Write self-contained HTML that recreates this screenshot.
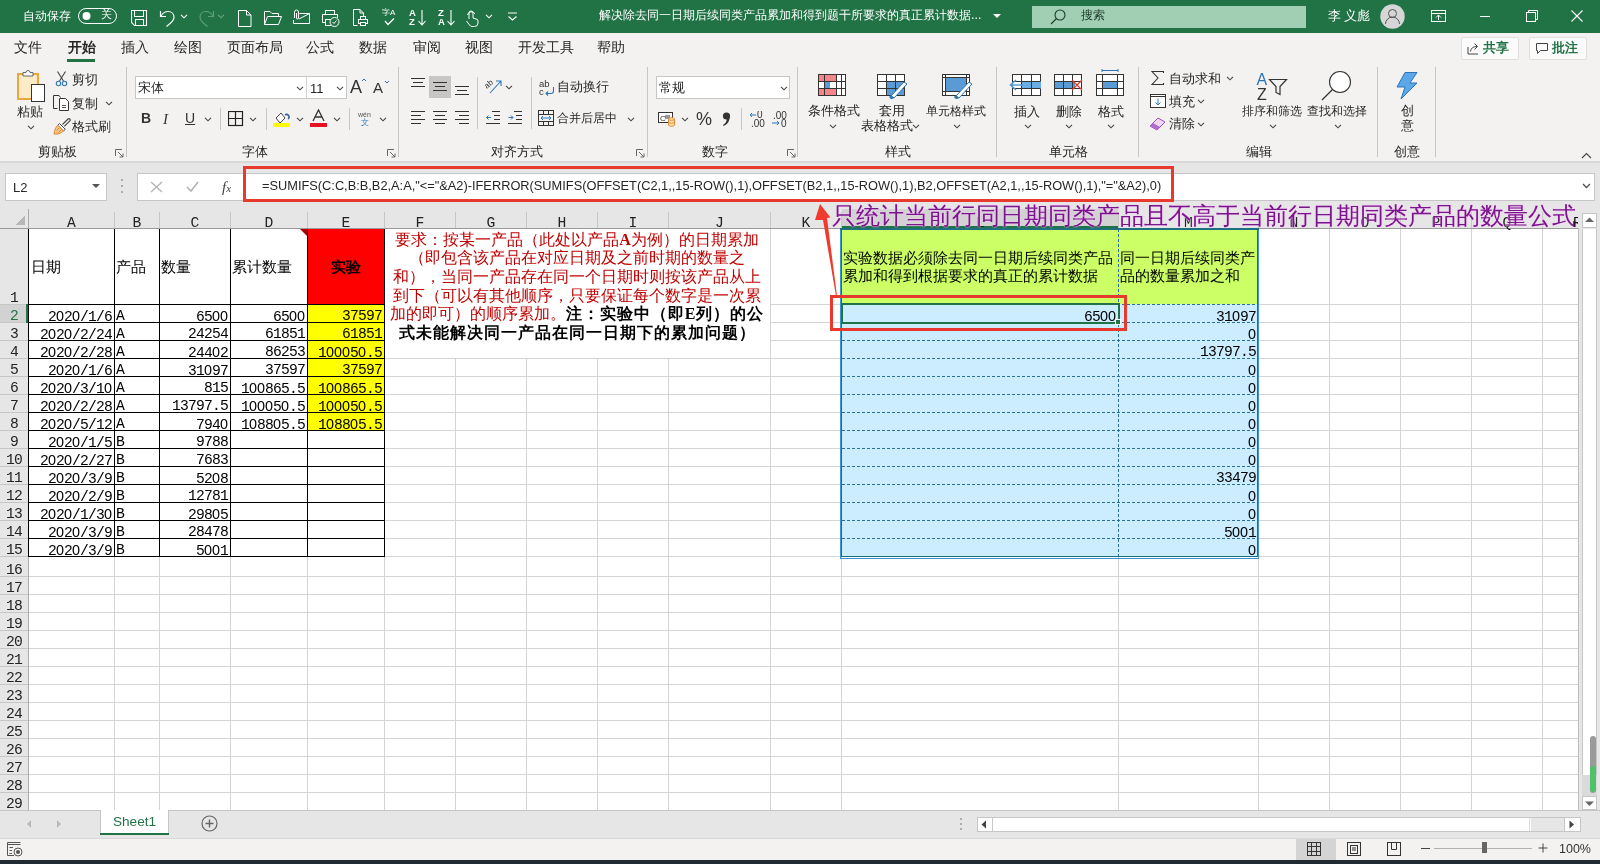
<!DOCTYPE html><html><head><meta charset="utf-8"><style>
*{box-sizing:border-box;margin:0;padding:0}
html,body{width:1600px;height:864px;overflow:hidden;background:#f3f2f1;font-family:"Liberation Sans",sans-serif;color:#262626}
.a{position:absolute;white-space:nowrap;will-change:transform}
.m{font-family:"Liberation Mono",monospace;font-size:14.67px;letter-spacing:-0.8px;color:#000;line-height:18px}
.z{font-family:'Liberation Sans',sans-serif;font-size:14.4px;letter-spacing:-0.01px}
.cj{font-size:15px;color:#000;line-height:18px}
</style></head><body>
<div class="a" style="left:0;top:0;width:1600px;height:33px;background:#217346"></div>
<div class="a" style="left:0;top:33px;width:1600px;height:130px;background:#f3f2f1"></div>
<div class="a" style="left:0;top:163px;width:1600px;height:46px;background:#e6e6e6"></div>
<div class="a" style="left:23px;top:10px;font-size:12.3px;line-height:12.3px;color:#ffffff;font-weight:normal;">自动保存</div>
<svg class="a" style="left:78px;top:8px;" width="39" height="16" viewBox="0 0 39 16"><rect x="0.5" y="0.5" width="38" height="15" rx="7.5" fill="none" stroke="#fff" stroke-width="1"/><circle cx="8.5" cy="8" r="4" fill="#fff"/></svg>
<div class="a" style="left:101px;top:9px;font-size:11px;line-height:11px;color:#ffffff;font-weight:normal;">关</div>
<svg class="a" style="left:131px;top:10px;" width="17" height="16" viewBox="0 0 17 16"><path d="M0.5 0.5 H15.5 V15.5 H3.5 L0.5 12.5 Z" fill="none" stroke="#fff" stroke-width="1.1"/><rect x="3.5" y="0.5" width="9" height="6" fill="none" stroke="#fff"/><rect x="4.5" y="9.5" width="8" height="6" fill="none" stroke="#fff"/></svg>
<svg class="a" style="left:159px;top:9px;" width="18" height="18" viewBox="0 0 18 18"><path d="M1.5 2 V7.5 H7" fill="none" stroke="#fff" stroke-width="1.2"/><path d="M2 7 C4 3.5 6.5 2.5 9 2.5 C12.5 2.5 15 5 15 8.5 C15 11 13.5 13 7.5 17.5" fill="none" stroke="#fff" stroke-width="1.2"/></svg>
<svg class="a" style="left:180px;top:13px;" width="8" height="6" viewBox="0 0 8 6"><path d="M1 1.7999999999999998 L4 4.800000000000001 L7 1.7999999999999998" fill="none" stroke="#fff" stroke-width="1.1"/></svg>
<svg class="a" style="left:197px;top:9px;" width="18" height="18" viewBox="0 0 18 18"><path d="M16.5 2 V7.5 H11" fill="none" stroke="#5e9e79" stroke-width="1.2"/><path d="M16 7 C14 3.5 11.5 2.5 9 2.5 C5.5 2.5 3 5 3 8.5 C3 11 4.5 13 10.5 17.5" fill="none" stroke="#5e9e79" stroke-width="1.2"/></svg>
<svg class="a" style="left:217px;top:13px;" width="8" height="6" viewBox="0 0 8 6"><path d="M1 1.7999999999999998 L4 4.800000000000001 L7 1.7999999999999998" fill="none" stroke="#6aa985" stroke-width="1.1"/></svg>
<svg class="a" style="left:238px;top:10px;" width="14" height="17" viewBox="0 0 14 17"><path d="M0.5 0.5 H8.5 L13 5 V16.5 H0.5 Z M8.5 0.5 V5 H13" fill="none" stroke="#fff"/></svg>
<svg class="a" style="left:264px;top:11px;" width="18" height="14" viewBox="0 0 18 14"><path d="M0.5 13.5 V0.5 H6 L8 2.5 H14.5 V5" fill="none" stroke="#fff"/><path d="M0.5 13.5 L3.5 5.5 H17.5 L14.5 13.5 Z" fill="none" stroke="#fff"/></svg>
<svg class="a" style="left:293px;top:9px;" width="18" height="16" viewBox="0 0 18 16"><path d="M6.5 4.5 H16.5 V14.5 H0.5 V11" fill="none" stroke="#fff"/><path d="M6 10 L16.5 4.5" stroke="#fff"/><path d="M1.5 9 V3 A2 2 0 0 1 5.5 3 V9 A1 1 0 0 1 3.5 9 V4" fill="none" stroke="#fff"/></svg>
<svg class="a" style="left:322px;top:10px;" width="18" height="17" viewBox="0 0 18 17"><rect x="3.5" y="0.5" width="9" height="4" fill="none" stroke="#fff"/><path d="M3.5 12.5 H0.5 V4.5 H15.5 V8" fill="none" stroke="#fff"/><rect x="3.5" y="9.5" width="6" height="6" fill="none" stroke="#fff"/><circle cx="12.5" cy="12" r="4.5" fill="#217346" stroke="#fff"/><path d="M10.5 12 L12 13.5 L14.5 10.5" fill="none" stroke="#fff"/></svg>
<svg class="a" style="left:353px;top:9px;" width="16" height="18" viewBox="0 0 16 18"><path d="M4.5 16.5 H0.5 V0.5 H7 L10.5 4 V7" fill="none" stroke="#fff"/><path d="M7 0.5 V4 H10.5" fill="none" stroke="#fff"/><rect x="7.5" y="7.5" width="5" height="3" fill="none" stroke="#fff"/><rect x="5.5" y="10.5" width="9" height="4" fill="none" stroke="#fff"/><rect x="7.5" y="13.5" width="5" height="3" fill="#217346" stroke="#fff"/></svg>
<div class="a" style="left:382px;top:9px;font-size:8px;line-height:8px;color:#ffffff;font-weight:normal;"><span style="font-size:8px">字A</span></div>
<svg class="a" style="left:384px;top:18px;" width="12" height="8" viewBox="0 0 12 8"><path d="M1 3 L4 6.5 L10 0.5" fill="none" stroke="#fff" stroke-width="1.2"/></svg>
<div class="a" style="left:409px;top:9px;font-size:8px;line-height:8px;color:#ffffff;font-weight:normal;"><span style="font-weight:bold;font-size:9.5px;line-height:8.5px">A<br>Z</span></div>
<svg class="a" style="left:418px;top:9px;" width="8" height="18" viewBox="0 0 8 18"><path d="M4 1 V16 M0.5 12 L4 16 L7.5 12" fill="none" stroke="#fff" stroke-width="1.1"/></svg>
<div class="a" style="left:438px;top:9px;font-size:8px;line-height:8px;color:#ffffff;font-weight:normal;"><span style="font-weight:bold;font-size:9.5px;line-height:8.5px">Z<br>A</span></div>
<svg class="a" style="left:447px;top:9px;" width="8" height="18" viewBox="0 0 8 18"><path d="M4 1 V16 M0.5 12 L4 16 L7.5 12" fill="none" stroke="#fff" stroke-width="1.1"/></svg>
<svg class="a" style="left:465px;top:9px;" width="14" height="18" viewBox="0 0 14 18"><path d="M4 10 V4 A2 2 0 0 1 8 4 V9 L11 10 A2 2 0 0 1 13 12 V14 A3.5 3.5 0 0 1 9.5 17.5 H7 A3 3 0 0 1 4.5 16 L1.5 12" fill="none" stroke="#fff"/><path d="M2.5 6 A4 4 0 0 1 10 5" fill="none" stroke="#fff"/></svg>
<svg class="a" style="left:485px;top:13px;" width="8" height="6" viewBox="0 0 8 6"><path d="M1 1.7999999999999998 L4 4.800000000000001 L7 1.7999999999999998" fill="none" stroke="#fff" stroke-width="1.1"/></svg>
<svg class="a" style="left:507px;top:12px;" width="11" height="9" viewBox="0 0 11 9"><path d="M1 1 H10" stroke="#fff"/><path d="M1.5 4.5 L5.5 8 L9.5 4.5" fill="none" stroke="#fff" stroke-width="1.1"/></svg>
<div class="a" style="left:599px;top:9px;font-size:12.4px;line-height:12.4px;color:#ffffff;font-weight:normal;">解决除去同一日期后续同类产品累加和得到题干所要求的真正累计数据...</div>
<svg class="a" style="left:993px;top:14px;" width="9" height="5" viewBox="0 0 9 5"><path d="M0 0 H8 L4 4 Z" fill="#fff"/></svg>
<div class="a" style="left:1032px;top:6px;width:274px;height:22px;background:#a0cfb3"></div>
<svg class="a" style="left:1050px;top:9px;" width="16" height="16" viewBox="0 0 16 16"><circle cx="10" cy="6" r="5" fill="none" stroke="#1d3b2b" stroke-width="1.1"/><path d="M6.5 9.5 L1 15" stroke="#1d3b2b" stroke-width="1.1"/></svg>
<div class="a" style="left:1081px;top:9px;font-size:12px;line-height:12px;color:#1d3b2b;font-weight:normal;">搜索</div>
<div class="a" style="left:1328px;top:10px;font-size:12.5px;line-height:12.5px;color:#ffffff;font-weight:normal;">李 义彪</div>
<svg class="a" style="left:1380px;top:4px;" width="25" height="25" viewBox="0 0 25 25"><circle cx="12.5" cy="12.5" r="12.2" fill="#d6d6d6"/><circle cx="12.5" cy="9.5" r="4" fill="none" stroke="#555" stroke-width="1"/><path d="M5.5 20 A7 7 0 0 1 19.5 20" fill="none" stroke="#555" stroke-width="1"/></svg>
<svg class="a" style="left:1431px;top:10px;" width="15" height="12" viewBox="0 0 15 12"><rect x="0.5" y="0.5" width="14" height="11" fill="none" stroke="#fff"/><path d="M0.5 3.5 H14.5" stroke="#fff"/><path d="M7.5 10 V5 M5 7.5 L7.5 5 L10 7.5" fill="none" stroke="#fff"/></svg>
<div class="a" style="left:1480px;top:16px;width:10px;height:1px;background:#fff"></div>
<svg class="a" style="left:1526px;top:10px;" width="12" height="12" viewBox="0 0 12 12"><rect x="0.5" y="2.5" width="9" height="9" fill="none" stroke="#fff"/><path d="M2.5 2.5 V0.5 H11.5 V9.5 H9.5" fill="none" stroke="#fff"/></svg>
<svg class="a" style="left:1571px;top:10px;" width="12" height="12" viewBox="0 0 12 12"><path d="M0.5 0.5 L11.5 11.5 M11.5 0.5 L0.5 11.5" stroke="#fff" stroke-width="1.1"/></svg>
<div class="a" style="left:14px;top:41px;font-size:13.8px;line-height:13.8px;color:#262626;font-weight:normal;">文件</div>
<div class="a" style="left:68px;top:41px;font-size:13.8px;line-height:13.8px;color:#262626;font-weight:bold;">开始</div>
<div class="a" style="left:121px;top:41px;font-size:13.8px;line-height:13.8px;color:#262626;font-weight:normal;">插入</div>
<div class="a" style="left:174px;top:41px;font-size:13.8px;line-height:13.8px;color:#262626;font-weight:normal;">绘图</div>
<div class="a" style="left:227px;top:41px;font-size:13.8px;line-height:13.8px;color:#262626;font-weight:normal;">页面布局</div>
<div class="a" style="left:305.5px;top:41px;font-size:13.8px;line-height:13.8px;color:#262626;font-weight:normal;">公式</div>
<div class="a" style="left:359px;top:41px;font-size:13.8px;line-height:13.8px;color:#262626;font-weight:normal;">数据</div>
<div class="a" style="left:412.5px;top:41px;font-size:13.8px;line-height:13.8px;color:#262626;font-weight:normal;">审阅</div>
<div class="a" style="left:465px;top:41px;font-size:13.8px;line-height:13.8px;color:#262626;font-weight:normal;">视图</div>
<div class="a" style="left:518px;top:41px;font-size:13.8px;line-height:13.8px;color:#262626;font-weight:normal;">开发工具</div>
<div class="a" style="left:597px;top:41px;font-size:13.8px;line-height:13.8px;color:#262626;font-weight:normal;">帮助</div>
<div class="a" style="left:67px;top:59px;width:28px;height:3px;background:#217346"></div>
<div class="a" style="left:1461px;top:37px;width:58px;height:23px;background:#fbfbfb;border:1px solid #e1dfdd;border-radius:2px"></div>
<svg class="a" style="left:1467px;top:42px;" width="13" height="13" viewBox="0 0 13 13"><path d="M1 5 V12 H11" fill="none" stroke="#444"/><path d="M3.5 9.5 C4 6 6 4.5 10 4.5 M7.5 1.5 L10.5 4.5 L7.5 7.5" fill="none" stroke="#444"/></svg>
<div class="a" style="left:1483px;top:41px;font-size:13px;line-height:13px;color:#217346;font-weight:bold;">共享</div>
<div class="a" style="left:1529px;top:37px;width:58px;height:23px;background:#fbfbfb;border:1px solid #e1dfdd;border-radius:2px"></div>
<svg class="a" style="left:1536px;top:43px;" width="13" height="12" viewBox="0 0 13 12"><path d="M0.5 0.5 H11.5 V7.5 H4.5 L1.5 10.5 V7.5 H0.5 Z" fill="none" stroke="#444"/></svg>
<div class="a" style="left:1552px;top:41px;font-size:13px;line-height:13px;color:#217346;font-weight:bold;">批注</div>
<svg class="a" style="left:16px;top:70px;" width="30" height="32" viewBox="0 0 30 32"><rect x="2" y="4" width="20" height="25" fill="#fdebc8" stroke="#e8a83c" stroke-width="2"/><path d="M7 5 V2.5 H10 A2 2 0 0 1 14 2.5 H17 V6 H7 Z" fill="#fff" stroke="#666" stroke-width="1"/><rect x="15.5" y="14.5" width="13" height="17" fill="#fff" stroke="#333" stroke-width="1"/></svg>
<div class="a" style="left:17px;top:106px;font-size:12.5px;line-height:12.5px;color:#262626;font-weight:normal;">粘贴</div>
<svg class="a" style="left:26.5px;top:123.5px;" width="8" height="6" viewBox="0 0 8 6"><path d="M1 1.7999999999999998 L4 4.800000000000001 L7 1.7999999999999998" fill="none" stroke="#444" stroke-width="1.1"/></svg>
<svg class="a" style="left:55px;top:71px;" width="13" height="16" viewBox="0 0 13 16"><path d="M2.5 0.5 L8.5 10 M10.5 0.5 L4.5 10" stroke="#444" stroke-width="1.1"/><circle cx="3.5" cy="12.5" r="2.2" fill="none" stroke="#2e75b6" stroke-width="1.1"/><circle cx="9.5" cy="12.5" r="2.2" fill="none" stroke="#2e75b6" stroke-width="1.1"/></svg>
<div class="a" style="left:72px;top:74px;font-size:12.5px;line-height:12.5px;color:#262626;font-weight:normal;">剪切</div>
<svg class="a" style="left:53px;top:95px;" width="17" height="17" viewBox="0 0 17 17"><path d="M4.5 13.5 H0.5 V0.5 H6 L7.5 2.5" fill="none" stroke="#333"/><path d="M6.5 3.5 H12.5 L15.5 6.5 V15.5 H6.5 Z" fill="#fff" stroke="#333"/><path d="M9 10.5 H13 M9 12.5 H13" stroke="#555"/></svg>
<div class="a" style="left:72px;top:98px;font-size:12.5px;line-height:12.5px;color:#262626;font-weight:normal;">复制</div>
<svg class="a" style="left:105px;top:100px;" width="8" height="6" viewBox="0 0 8 6"><path d="M1 1.7999999999999998 L4 4.800000000000001 L7 1.7999999999999998" fill="none" stroke="#444" stroke-width="1.1"/></svg>
<svg class="a" style="left:53px;top:118px;" width="18" height="17" viewBox="0 0 18 17"><path d="M9.5 6.5 L15 1 A1.2 1.2 0 0 1 16.8 2.8 L11.3 8.3" fill="none" stroke="#444" stroke-width="1.1"/><path d="M6.5 5.5 L12.3 11.3 L10.5 13 L4.8 7.3 Z" fill="#fff" stroke="#444"/><path d="M4.8 7.3 L10.5 13 C8 15.5 5 16.5 1 16 C1.5 12 2.5 9.5 4.8 7.3 Z" fill="#f7c48b" stroke="#e8892c"/><path d="M3.5 12.5 L6 10 M5.5 14.5 L8 12" stroke="#e8892c"/></svg>
<div class="a" style="left:72px;top:121px;font-size:12.5px;line-height:12.5px;color:#262626;font-weight:normal;">格式刷</div>
<div class="a" style="left:38px;top:146px;font-size:12.5px;line-height:12.5px;color:#262626;font-weight:normal;">剪贴板</div>
<svg class="a" style="left:115px;top:149px;" width="9" height="9" viewBox="0 0 9 9"><path d="M0.5 7 V0.5 H7" fill="none" stroke="#666"/><path d="M3 3 L8 8 M4.5 8 H8 V4.5" fill="none" stroke="#666"/></svg>
<div class="a" style="left:126px;top:67px;width:1px;height:90px;background:#c8c6c4"></div>
<div class="a" style="left:135px;top:76px;width:212px;height:23px;background:#fff;border:1px solid #c8c6c4"></div>
<div class="a" style="left:306px;top:77px;width:1px;height:21px;background:#d4d4d4"></div>
<div class="a" style="left:138px;top:82px;font-size:12.5px;line-height:12.5px;color:#262626;font-weight:normal;">宋体</div>
<svg class="a" style="left:296px;top:85px;" width="8" height="6" viewBox="0 0 8 6"><path d="M1 1.7999999999999998 L4 4.800000000000001 L7 1.7999999999999998" fill="none" stroke="#444" stroke-width="1.1"/></svg>
<div class="a" style="left:310px;top:82px;font-size:13px;line-height:13px;color:#262626;font-weight:normal;"><span style="font-family:'Liberation Sans';font-size:13px">11</span></div>
<svg class="a" style="left:336px;top:85px;" width="8" height="6" viewBox="0 0 8 6"><path d="M1 1.7999999999999998 L4 4.800000000000001 L7 1.7999999999999998" fill="none" stroke="#444" stroke-width="1.1"/></svg>
<svg class="a" style="left:350px;top:77px;" width="18" height="18" viewBox="0 0 18 18"><text x="0" y="16" font-family="Liberation Sans" font-size="18" fill="#333">A</text><path d="M12 4 L14 2 L16 4" fill="none" stroke="#2e75b6"/></svg>
<svg class="a" style="left:373px;top:79px;" width="18" height="16" viewBox="0 0 18 16"><text x="0" y="14" font-family="Liberation Sans" font-size="15" fill="#333">A</text><path d="M12 2 L14 4 L16 2" fill="none" stroke="#2e75b6"/></svg>
<div class="a" style="left:141px;top:111px;font-size:14px;line-height:14px;color:#333;font-weight:normal;"><span style="font-family:'Liberation Sans';font-weight:bold;font-size:14px">B</span></div>
<div class="a" style="left:163px;top:111px;font-size:15px;line-height:15px;color:#333;font-weight:normal;"><span style="font-family:'Liberation Serif';font-style:italic;font-size:15px">I</span></div>
<div class="a" style="left:185px;top:111px;font-size:14px;line-height:14px;color:#333;font-weight:normal;"><span style="font-family:'Liberation Sans';font-size:14px;text-decoration:underline">U</span></div>
<svg class="a" style="left:204px;top:116px;" width="8" height="6" viewBox="0 0 8 6"><path d="M1 1.7999999999999998 L4 4.800000000000001 L7 1.7999999999999998" fill="none" stroke="#444" stroke-width="1.1"/></svg>
<div class="a" style="left:220px;top:108px;width:1px;height:22px;background:#c8c6c4"></div>
<svg class="a" style="left:228px;top:111px;" width="16" height="16" viewBox="0 0 16 16"><rect x="0.5" y="0.5" width="14" height="14" fill="none" stroke="#222" stroke-width="1.2"/><path d="M7.5 0.5 V14.5 M0.5 7.5 H14.5" stroke="#222" stroke-width="1.2"/></svg>
<svg class="a" style="left:249px;top:116px;" width="8" height="6" viewBox="0 0 8 6"><path d="M1 1.7999999999999998 L4 4.800000000000001 L7 1.7999999999999998" fill="none" stroke="#444" stroke-width="1.1"/></svg>
<div class="a" style="left:266px;top:108px;width:1px;height:22px;background:#c8c6c4"></div>
<svg class="a" style="left:273px;top:110px;" width="18" height="18" viewBox="0 0 18 18"><path d="M3 8 L8 3 L12 8 L7 13 Z" fill="#fff" stroke="#444"/><path d="M12 5 A2 2 0 0 1 15 9" fill="none" stroke="#2e5fa3" stroke-width="1.5"/><rect x="0" y="13" width="17" height="4" fill="#ffff00"/></svg>
<svg class="a" style="left:295.5px;top:116px;" width="8" height="6" viewBox="0 0 8 6"><path d="M1 1.7999999999999998 L4 4.800000000000001 L7 1.7999999999999998" fill="none" stroke="#444" stroke-width="1.1"/></svg>
<svg class="a" style="left:310px;top:109px;" width="18" height="19" viewBox="0 0 18 19"><path d="M3 12 L8.5 1 L14 12 M5 8 H12" fill="none" stroke="#333" stroke-width="1.3"/><rect x="0" y="14" width="17" height="4" fill="#e81123"/></svg>
<svg class="a" style="left:332.5px;top:116px;" width="8" height="6" viewBox="0 0 8 6"><path d="M1 1.7999999999999998 L4 4.800000000000001 L7 1.7999999999999998" fill="none" stroke="#444" stroke-width="1.1"/></svg>
<div class="a" style="left:349px;top:108px;width:1px;height:22px;background:#c8c6c4"></div>
<div class="a" style="left:358px;top:111px;font-size:7px;line-height:7px;color:#555;font-weight:normal;"><span style="font-size:7px;line-height:7px">wén</span></div>
<div class="a" style="left:361px;top:119px;font-size:8px;line-height:8px;color:#2e75b6;font-weight:normal;">文</div>
<svg class="a" style="left:379px;top:116px;" width="8" height="6" viewBox="0 0 8 6"><path d="M1 1.7999999999999998 L4 4.800000000000001 L7 1.7999999999999998" fill="none" stroke="#444" stroke-width="1.1"/></svg>
<div class="a" style="left:242px;top:146px;font-size:12.5px;line-height:12.5px;color:#262626;font-weight:normal;">字体</div>
<svg class="a" style="left:387px;top:149px;" width="9" height="9" viewBox="0 0 9 9"><path d="M0.5 7 V0.5 H7" fill="none" stroke="#666"/><path d="M3 3 L8 8 M4.5 8 H8 V4.5" fill="none" stroke="#666"/></svg>
<div class="a" style="left:398px;top:67px;width:1px;height:90px;background:#c8c6c4"></div>
<svg class="a" style="left:411px;top:78px;" width="15" height="11" viewBox="0 0 15 11"><path d="M0 0.5 H14 M2 4.5 H12 M0 8.5 H14" stroke="#333"/></svg>
<div class="a" style="left:429px;top:76px;width:22px;height:22px;background:#c8c6c4"></div>
<svg class="a" style="left:433px;top:82px;" width="15" height="11" viewBox="0 0 15 11"><path d="M0 0.5 H14 M2 4.5 H12 M0 8.5 H14" stroke="#333"/></svg>
<svg class="a" style="left:455px;top:86px;" width="15" height="11" viewBox="0 0 15 11"><path d="M0 0.5 H14 M2 4.5 H12 M0 8.5 H14" stroke="#333"/></svg>
<div class="a" style="left:477px;top:77px;width:1px;height:52px;background:#c8c6c4"></div>
<svg class="a" style="left:485px;top:77px;" width="18" height="17" viewBox="0 0 18 17"><text x="0" y="9" font-family="Liberation Sans" font-size="8" fill="#333" transform="rotate(-40 5 8)">ab</text><path d="M5 16 L16 4 M11 4 H16 V9" fill="none" stroke="#2e75b6" stroke-width="1.1"/></svg>
<svg class="a" style="left:505px;top:84px;" width="8" height="6" viewBox="0 0 8 6"><path d="M1 1.7999999999999998 L4 4.800000000000001 L7 1.7999999999999998" fill="none" stroke="#444" stroke-width="1.1"/></svg>
<div class="a" style="left:531px;top:77px;width:1px;height:52px;background:#c8c6c4"></div>
<svg class="a" style="left:539px;top:79px;" width="17" height="17" viewBox="0 0 17 17"><text x="0" y="8" font-family="Liberation Sans" font-size="9.5" fill="#333">ab</text><text x="0" y="16" font-family="Liberation Sans" font-size="9.5" fill="#333">c</text><path d="M14.5 8 V12 A2.5 2.5 0 0 1 12 14.5 H7 M9 12.5 L7 14.5 L9 16.5" fill="none" stroke="#2e75b6" stroke-width="1.1"/></svg>
<div class="a" style="left:557px;top:81px;font-size:12.5px;line-height:12.5px;color:#262626;font-weight:normal;">自动换行</div>
<svg class="a" style="left:411px;top:111px;" width="15" height="17" viewBox="0 0 15 17"><path d="M0 0.5 H14 M0 4.5 H10 M0 8.5 H14 M0 12.5 H10" stroke="#333"/></svg>
<svg class="a" style="left:433px;top:111px;" width="15" height="17" viewBox="0 0 15 17"><path d="M0 0.5 H14 M2 4.5 H12 M0 8.5 H14 M2 12.5 H12" stroke="#333"/></svg>
<svg class="a" style="left:455px;top:111px;" width="15" height="17" viewBox="0 0 15 17"><path d="M0 0.5 H14 M4 4.5 H14 M0 8.5 H14 M4 12.5 H14" stroke="#333"/></svg>
<svg class="a" style="left:486px;top:111px;" width="15" height="15" viewBox="0 0 15 15"><path d="M6 0.5 H14 M8 4.5 H14 M8 8.5 H14 M0 12.5 H14" stroke="#333"/><path d="M5 6.5 H0.5 M2.5 4.5 L0.5 6.5 L2.5 8.5" fill="none" stroke="#2e75b6"/></svg>
<svg class="a" style="left:508px;top:111px;" width="15" height="15" viewBox="0 0 15 15"><path d="M6 0.5 H14 M8 4.5 H14 M8 8.5 H14 M0 12.5 H14" stroke="#333"/><path d="M0.5 6.5 H5 M3 4.5 L5 6.5 L3 8.5" fill="none" stroke="#2e75b6"/></svg>
<svg class="a" style="left:538px;top:110px;" width="16" height="16" viewBox="0 0 16 16"><rect x="0.5" y="0.5" width="15" height="15" fill="none" stroke="#333"/><path d="M0.5 4.5 H15.5 M0.5 11.5 H15.5 M5.5 0.5 V4.5 M10.5 0.5 V4.5 M5.5 11.5 V15.5 M10.5 11.5 V15.5" stroke="#333"/><path d="M3 8 H13 M5 6 L3 8 L5 10 M11 6 L13 8 L11 10" fill="none" stroke="#2e75b6"/></svg>
<div class="a" style="left:557px;top:112px;font-size:12px;line-height:12px;color:#262626;font-weight:normal;">合并后居中</div>
<svg class="a" style="left:627px;top:116px;" width="8" height="6" viewBox="0 0 8 6"><path d="M1 1.7999999999999998 L4 4.800000000000001 L7 1.7999999999999998" fill="none" stroke="#444" stroke-width="1.1"/></svg>
<div class="a" style="left:491px;top:146px;font-size:12.5px;line-height:12.5px;color:#262626;font-weight:normal;">对齐方式</div>
<svg class="a" style="left:636px;top:149px;" width="9" height="9" viewBox="0 0 9 9"><path d="M0.5 7 V0.5 H7" fill="none" stroke="#666"/><path d="M3 3 L8 8 M4.5 8 H8 V4.5" fill="none" stroke="#666"/></svg>
<div class="a" style="left:647px;top:67px;width:1px;height:90px;background:#c8c6c4"></div>
<div class="a" style="left:656px;top:76px;width:134px;height:23px;background:#fff;border:1px solid #c8c6c4"></div>
<div class="a" style="left:659px;top:82px;font-size:12.5px;line-height:12.5px;color:#262626;font-weight:normal;">常规</div>
<svg class="a" style="left:780px;top:85px;" width="8" height="6" viewBox="0 0 8 6"><path d="M1 1.7999999999999998 L4 4.800000000000001 L7 1.7999999999999998" fill="none" stroke="#444" stroke-width="1.1"/></svg>
<svg class="a" style="left:658px;top:111px;" width="18" height="16" viewBox="0 0 18 16"><rect x="0.5" y="1.5" width="14" height="10" fill="#fff" stroke="#333"/><text x="2" y="10" font-family="Liberation Sans" font-size="8" fill="#333">C</text><path d="M7 5 H12 M7 7 H12" stroke="#333"/><path d="M10.5 8 V14 A3 1.3 0 0 0 16.5 14 V8" fill="#fce4c4" stroke="#e8892c"/><ellipse cx="13.5" cy="8" rx="3" ry="1.3" fill="#fce4c4" stroke="#e8892c"/><path d="M10.5 11 A3 1.3 0 0 0 16.5 11" fill="none" stroke="#e8892c"/></svg>
<svg class="a" style="left:681px;top:116px;" width="8" height="6" viewBox="0 0 8 6"><path d="M1 1.7999999999999998 L4 4.800000000000001 L7 1.7999999999999998" fill="none" stroke="#444" stroke-width="1.1"/></svg>
<div class="a" style="left:696px;top:110px;font-size:18px;line-height:18px;color:#333;font-weight:normal;"><span style="font-family:'Liberation Sans';font-size:18px">%</span></div>
<svg class="a" style="left:721px;top:111px;" width="11" height="16" viewBox="0 0 11 16"><circle cx="5.5" cy="5" r="3.6" fill="#333"/><path d="M8.6 5.5 C8.8 10 6.5 13.5 2.5 15 L2 14 C4.5 12.5 6 10 5.8 7.5 Z" fill="#333"/></svg>
<div class="a" style="left:741px;top:108px;width:1px;height:22px;background:#c8c6c4"></div>
<svg class="a" style="left:749px;top:111px;" width="17" height="16" viewBox="0 0 17 16"><text x="8" y="7" font-family="Liberation Sans" font-size="10" fill="#333">0</text><text x="2" y="16" font-family="Liberation Sans" font-size="10" fill="#333">.00</text><path d="M7 4 H1 M3 2 L1 4 L3 6" fill="none" stroke="#2e75b6"/></svg>
<svg class="a" style="left:771px;top:111px;" width="17" height="16" viewBox="0 0 17 16"><text x="2" y="8" font-family="Liberation Sans" font-size="10" fill="#333">.00</text><text x="10" y="16" font-family="Liberation Sans" font-size="10" fill="#333">0</text><path d="M1 12 H8 M6 10 L8 12 L6 14" fill="none" stroke="#2e75b6"/></svg>
<div class="a" style="left:702px;top:146px;font-size:12.5px;line-height:12.5px;color:#262626;font-weight:normal;">数字</div>
<svg class="a" style="left:787px;top:149px;" width="9" height="9" viewBox="0 0 9 9"><path d="M0.5 7 V0.5 H7" fill="none" stroke="#666"/><path d="M3 3 L8 8 M4.5 8 H8 V4.5" fill="none" stroke="#666"/></svg>
<div class="a" style="left:797px;top:67px;width:1px;height:90px;background:#c8c6c4"></div>
<svg class="a" style="left:818px;top:74px;" width="29" height="23" viewBox="0 0 29 23"><rect x="0.5" y="0.5" width="27" height="21" fill="#fff" stroke="#333"/><rect x="1" y="1" width="17" height="7" fill="#f4868a"/><rect x="1" y="14" width="17" height="7" fill="#f4868a"/><rect x="6" y="8" width="6" height="6" fill="#5b9bd5"/><path d="M0.5 7.5 H27.5 M0.5 14.5 H27.5 M6.5 0.5 V21.5 M18.5 0.5 V21.5 M23.5 0.5 V21.5" stroke="#333"/></svg>
<div class="a" style="left:808px;top:105px;font-size:12.5px;line-height:12.5px;color:#262626;font-weight:normal;">条件格式</div>
<svg class="a" style="left:829px;top:123px;" width="8" height="6" viewBox="0 0 8 6"><path d="M1 1.7999999999999998 L4 4.800000000000001 L7 1.7999999999999998" fill="none" stroke="#444" stroke-width="1.1"/></svg>
<svg class="a" style="left:877px;top:74px;" width="32" height="28" viewBox="0 0 32 28"><rect x="0.5" y="0.5" width="27" height="21" fill="#fff" stroke="#333"/><rect x="10" y="8" width="17" height="13" fill="#5b9bd5"/><path d="M0.5 7.5 H27.5 M0.5 14.5 H27.5 M9.5 0.5 V21.5 M18.5 0.5 V21.5" stroke="#333"/><path d="M14 22 L27 8 L30 10 L17 24 Z" fill="#fff" stroke="#2e75b6"/><path d="M12 23 A3 3 0 0 0 17 24 L14 21 Z" fill="#2e75b6"/></svg>
<div class="a" style="left:879px;top:105px;font-size:12.5px;line-height:12.5px;color:#262626;font-weight:normal;">套用</div>
<div class="a" style="left:861px;top:120px;font-size:12.5px;line-height:12.5px;color:#262626;font-weight:normal;">表格格式</div>
<svg class="a" style="left:912px;top:123px;" width="8" height="6" viewBox="0 0 8 6"><path d="M1 1.7999999999999998 L4 4.800000000000001 L7 1.7999999999999998" fill="none" stroke="#444" stroke-width="1.1"/></svg>
<svg class="a" style="left:942px;top:74px;" width="32" height="28" viewBox="0 0 32 28"><rect x="0.5" y="0.5" width="27" height="21" fill="#fff" stroke="#333"/><rect x="4" y="4" width="20" height="14" fill="#5b9bd5"/><path d="M0.5 3.5 H27.5 M0.5 17.5 H27.5 M3.5 0.5 V21.5 M24.5 0.5 V21.5" stroke="#333"/><path d="M14 22 L27 8 L30 10 L17 24 Z" fill="#fff" stroke="#2e75b6"/><path d="M12 23 A3 3 0 0 0 17 24 L14 21 Z" fill="#2e75b6"/></svg>
<div class="a" style="left:926px;top:105px;font-size:12px;line-height:12px;color:#262626;font-weight:normal;">单元格样式</div>
<svg class="a" style="left:953px;top:123px;" width="8" height="6" viewBox="0 0 8 6"><path d="M1 1.7999999999999998 L4 4.800000000000001 L7 1.7999999999999998" fill="none" stroke="#444" stroke-width="1.1"/></svg>
<div class="a" style="left:885px;top:146px;font-size:12.5px;line-height:12.5px;color:#262626;font-weight:normal;">样式</div>
<div class="a" style="left:996px;top:67px;width:1px;height:90px;background:#c8c6c4"></div>
<svg class="a" style="left:1009px;top:74px;" width="33" height="23" viewBox="0 0 33 23"><rect x="3.5" y="0.5" width="28" height="21" fill="#fff" stroke="#333"/><rect x="12" y="7" width="20" height="8" fill="#6aaee8"/><path d="M3.5 7.5 H31.5 M3.5 14.5 H31.5 M12.5 0.5 V21.5 M22.5 0.5 V21.5" stroke="#333"/><path d="M14 11 H2 M7 6 L1.5 11 L7 16" fill="none" stroke="#5b9bd5" stroke-width="1.6"/></svg>
<div class="a" style="left:1014px;top:106px;font-size:12.5px;line-height:12.5px;color:#262626;font-weight:normal;">插入</div>
<svg class="a" style="left:1024px;top:123px;" width="8" height="6" viewBox="0 0 8 6"><path d="M1 1.7999999999999998 L4 4.800000000000001 L7 1.7999999999999998" fill="none" stroke="#444" stroke-width="1.1"/></svg>
<svg class="a" style="left:1054px;top:74px;" width="30" height="23" viewBox="0 0 30 23"><rect x="0.5" y="0.5" width="27" height="21" fill="#fff" stroke="#333"/><rect x="1" y="8" width="20" height="6" fill="#5b9bd5"/><path d="M0.5 7.5 H27.5 M0.5 14.5 H27.5 M9.5 0.5 V21.5 M18.5 0.5 V21.5" stroke="#333"/><path d="M18 6 L28 16 M28 6 L18 16" stroke="#e8392e" stroke-width="1.3"/></svg>
<div class="a" style="left:1056px;top:106px;font-size:12.5px;line-height:12.5px;color:#262626;font-weight:normal;">删除</div>
<svg class="a" style="left:1065px;top:123px;" width="8" height="6" viewBox="0 0 8 6"><path d="M1 1.7999999999999998 L4 4.800000000000001 L7 1.7999999999999998" fill="none" stroke="#444" stroke-width="1.1"/></svg>
<svg class="a" style="left:1096px;top:69px;" width="29" height="28" viewBox="0 0 29 28"><path d="M6 1.5 H22 M6 0 V3 M22 0 V3" stroke="#2e75b6"/><rect x="0.5" y="5.5" width="27" height="21" fill="#fff" stroke="#333"/><rect x="7" y="12" width="14" height="7" fill="#5b9bd5"/><path d="M0.5 12.5 H27.5 M0.5 19.5 H27.5 M6.5 5.5 V26.5 M21.5 5.5 V26.5" stroke="#333"/></svg>
<div class="a" style="left:1098px;top:106px;font-size:12.5px;line-height:12.5px;color:#262626;font-weight:normal;">格式</div>
<svg class="a" style="left:1107px;top:123px;" width="8" height="6" viewBox="0 0 8 6"><path d="M1 1.7999999999999998 L4 4.800000000000001 L7 1.7999999999999998" fill="none" stroke="#444" stroke-width="1.1"/></svg>
<div class="a" style="left:1049px;top:146px;font-size:12.5px;line-height:12.5px;color:#262626;font-weight:normal;">单元格</div>
<div class="a" style="left:1138px;top:67px;width:1px;height:90px;background:#c8c6c4"></div>
<svg class="a" style="left:1151px;top:71px;" width="14" height="14" viewBox="0 0 14 14"><path d="M12.5 2 V0.5 H1 L7 7 L1 13.5 H12.5 V12" fill="none" stroke="#333" stroke-width="1.1"/></svg>
<div class="a" style="left:1169px;top:73px;font-size:12.5px;line-height:12.5px;color:#262626;font-weight:normal;">自动求和</div>
<svg class="a" style="left:1226px;top:75px;" width="8" height="6" viewBox="0 0 8 6"><path d="M1 1.7999999999999998 L4 4.800000000000001 L7 1.7999999999999998" fill="none" stroke="#444" stroke-width="1.1"/></svg>
<svg class="a" style="left:1150px;top:94px;" width="17" height="14" viewBox="0 0 17 14"><rect x="0.5" y="0.5" width="15" height="13" fill="#fff" stroke="#333"/><path d="M0.5 2.5 H15.5" stroke="#333"/><path d="M8 4.5 V11 M5.5 8.5 L8 11 L10.5 8.5" fill="none" stroke="#2e75b6"/></svg>
<div class="a" style="left:1169px;top:96px;font-size:12.5px;line-height:12.5px;color:#262626;font-weight:normal;">填充</div>
<svg class="a" style="left:1197px;top:98px;" width="8" height="6" viewBox="0 0 8 6"><path d="M1 1.7999999999999998 L4 4.800000000000001 L7 1.7999999999999998" fill="none" stroke="#444" stroke-width="1.1"/></svg>
<svg class="a" style="left:1149px;top:116px;" width="18" height="16" viewBox="0 0 18 16"><path d="M1 10 L9 2 L16 6 L8 14 Z" fill="#f0d8f5" stroke="#9b4fb8"/><path d="M1 10 L4 7 L11 11 L8 14 Z" fill="#b46bd1"/></svg>
<div class="a" style="left:1169px;top:118px;font-size:12.5px;line-height:12.5px;color:#262626;font-weight:normal;">清除</div>
<svg class="a" style="left:1197px;top:121px;" width="8" height="6" viewBox="0 0 8 6"><path d="M1 1.7999999999999998 L4 4.800000000000001 L7 1.7999999999999998" fill="none" stroke="#444" stroke-width="1.1"/></svg>
<svg class="a" style="left:1255px;top:71px;" width="34" height="30" viewBox="0 0 34 30"><text x="1.5" y="14" font-family="Liberation Sans" font-size="16" fill="#2e75b6">A</text><text x="2" y="28.5" font-family="Liberation Sans" font-size="16" fill="#333">Z</text><path d="M14.5 8.5 H31.5 L25 15.5 V23.5 L21 21.5 V15.5 Z" fill="none" stroke="#333" stroke-width="1.2"/></svg>
<div class="a" style="left:1242px;top:105px;font-size:12px;line-height:12px;color:#262626;font-weight:normal;">排序和筛选</div>
<svg class="a" style="left:1269px;top:123px;" width="8" height="6" viewBox="0 0 8 6"><path d="M1 1.7999999999999998 L4 4.800000000000001 L7 1.7999999999999998" fill="none" stroke="#444" stroke-width="1.1"/></svg>
<svg class="a" style="left:1320px;top:70px;" width="33" height="32" viewBox="0 0 33 32"><circle cx="20" cy="12" r="10.5" fill="#fff" stroke="#333" stroke-width="1.1"/><path d="M12.5 19.5 L2 30" stroke="#333" stroke-width="1.2"/></svg>
<div class="a" style="left:1307px;top:105px;font-size:12px;line-height:12px;color:#262626;font-weight:normal;">查找和选择</div>
<svg class="a" style="left:1334px;top:123px;" width="8" height="6" viewBox="0 0 8 6"><path d="M1 1.7999999999999998 L4 4.800000000000001 L7 1.7999999999999998" fill="none" stroke="#444" stroke-width="1.1"/></svg>
<div class="a" style="left:1246px;top:146px;font-size:12.5px;line-height:12.5px;color:#262626;font-weight:normal;">编辑</div>
<div class="a" style="left:1377px;top:67px;width:1px;height:90px;background:#c8c6c4"></div>
<svg class="a" style="left:1396px;top:72px;" width="22" height="28" viewBox="0 0 22 28"><path d="M9 0.5 H21 L14 11 H21 L5 27 L9 15 H1 Z" fill="#5ba7e8" stroke="#2e75b6" stroke-width="1"/></svg>
<div class="a" style="left:1401px;top:105px;font-size:12.5px;line-height:12.5px;color:#262626;font-weight:normal;">创</div>
<div class="a" style="left:1401px;top:120px;font-size:12.5px;line-height:12.5px;color:#262626;font-weight:normal;">意</div>
<div class="a" style="left:1394px;top:146px;font-size:12.5px;line-height:12.5px;color:#262626;font-weight:normal;">创意</div>
<div class="a" style="left:1435px;top:67px;width:1px;height:90px;background:#c8c6c4"></div>
<svg class="a" style="left:1581px;top:152px;" width="11" height="7" viewBox="0 0 11 7"><path d="M1 6 L5.5 1.5 L10 6" fill="none" stroke="#444" stroke-width="1.1"/></svg>
<div class="a" style="left:0;top:161px;width:1600px;height:2px;background:#d8d8d8"></div>
<div class="a" style="left:5px;top:173px;width:102px;height:28px;background:#fff;border:1px solid #c6c6c6"></div>
<div class="a" style="left:13px;top:181px;font-size:13px;line-height:13px;color:#262626;font-weight:normal;"><span style="font-size:13px">L2</span></div>
<svg class="a" style="left:92px;top:184px;" width="9" height="5" viewBox="0 0 9 5"><path d="M0 0 H8 L4 4 Z" fill="#555"/></svg>
<svg class="a" style="left:120px;top:178px;" width="4" height="18" viewBox="0 0 4 18"><circle cx="2" cy="2" r="1" fill="#999"/><circle cx="2" cy="8" r="1" fill="#999"/><circle cx="2" cy="14" r="1" fill="#999"/></svg>
<div class="a" style="left:137px;top:173px;width:1458px;height:28px;background:#fff;border:1px solid #c6c6c6"></div>
<svg class="a" style="left:150px;top:181px;" width="13" height="12" viewBox="0 0 13 12"><path d="M1 1 L12 11 M12 1 L1 11" stroke="#b3b3b3" stroke-width="1.3"/></svg>
<svg class="a" style="left:186px;top:181px;" width="13" height="12" viewBox="0 0 13 12"><path d="M1 6 L5 10 L12 1" fill="none" stroke="#b3b3b3" stroke-width="1.6"/></svg>
<div class="a" style="left:222px;top:180px;font-size:14px;line-height:14px;color:#444;font-weight:normal;"><span style="font-family:'Liberation Serif';font-style:italic;font-size:15px">f<span style="font-size:11px">x</span></span></div>
<div class="a" style="left:244px;top:173px;width:1px;height:28px;background:#d4d4d4"></div>
<div class="a" style="left:262px;top:180px;font-size:12.8px;line-height:12.8px;color:#262626;font-weight:normal;">=SUMIFS(C:C,B:B,B2,A:A,"&lt;="&amp;A2)-IFERROR(SUMIFS(OFFSET(C2,1,,15-ROW(),1),OFFSET(B2,1,,15-ROW(),1),B2,OFFSET(A2,1,,15-ROW(),1),"="&amp;A2),0)</div>
<svg class="a" style="left:1582px;top:183px;" width="9" height="6" viewBox="0 0 9 6"><path d="M1 1 L4.5 4.5 L8 1" fill="none" stroke="#555" stroke-width="1.4"/></svg>
<div class="a" style="left:243px;top:166px;width:931px;height:36px;border:3px solid #e8392e"></div>
<svg class="a" style="left:0;top:209px" width="1600" height="601" shape-rendering="crispEdges"><rect x="0" y="0" width="1600" height="601" fill="#ffffff"/><rect x="0" y="0" width="1578" height="19" fill="#e6e6e6"/><rect x="0" y="0" width="28" height="601" fill="#e6e6e6"/><line x1="114.5" y1="20" x2="114.5" y2="601" stroke="#d4d4d4" stroke-width="1"/><line x1="159.5" y1="20" x2="159.5" y2="601" stroke="#d4d4d4" stroke-width="1"/><line x1="230.5" y1="20" x2="230.5" y2="601" stroke="#d4d4d4" stroke-width="1"/><line x1="307.5" y1="20" x2="307.5" y2="601" stroke="#d4d4d4" stroke-width="1"/><line x1="384.5" y1="20" x2="384.5" y2="601" stroke="#d4d4d4" stroke-width="1"/><line x1="455.5" y1="20" x2="455.5" y2="601" stroke="#d4d4d4" stroke-width="1"/><line x1="526.5" y1="20" x2="526.5" y2="601" stroke="#d4d4d4" stroke-width="1"/><line x1="597.5" y1="20" x2="597.5" y2="601" stroke="#d4d4d4" stroke-width="1"/><line x1="668.5" y1="20" x2="668.5" y2="601" stroke="#d4d4d4" stroke-width="1"/><line x1="770.5" y1="20" x2="770.5" y2="601" stroke="#d4d4d4" stroke-width="1"/><line x1="841.5" y1="20" x2="841.5" y2="601" stroke="#d4d4d4" stroke-width="1"/><line x1="1118.5" y1="20" x2="1118.5" y2="601" stroke="#d4d4d4" stroke-width="1"/><line x1="1258.5" y1="20" x2="1258.5" y2="601" stroke="#d4d4d4" stroke-width="1"/><line x1="1329.5" y1="20" x2="1329.5" y2="601" stroke="#d4d4d4" stroke-width="1"/><line x1="1400.5" y1="20" x2="1400.5" y2="601" stroke="#d4d4d4" stroke-width="1"/><line x1="1471.5" y1="20" x2="1471.5" y2="601" stroke="#d4d4d4" stroke-width="1"/><line x1="1542.5" y1="20" x2="1542.5" y2="601" stroke="#d4d4d4" stroke-width="1"/><line x1="28" y1="95.5" x2="1578" y2="95.5" stroke="#d4d4d4" stroke-width="1"/><line x1="28" y1="113.5" x2="1578" y2="113.5" stroke="#d4d4d4" stroke-width="1"/><line x1="28" y1="131.5" x2="1578" y2="131.5" stroke="#d4d4d4" stroke-width="1"/><line x1="28" y1="149.5" x2="1578" y2="149.5" stroke="#d4d4d4" stroke-width="1"/><line x1="28" y1="167.5" x2="1578" y2="167.5" stroke="#d4d4d4" stroke-width="1"/><line x1="28" y1="185.5" x2="1578" y2="185.5" stroke="#d4d4d4" stroke-width="1"/><line x1="28" y1="203.5" x2="1578" y2="203.5" stroke="#d4d4d4" stroke-width="1"/><line x1="28" y1="221.5" x2="1578" y2="221.5" stroke="#d4d4d4" stroke-width="1"/><line x1="28" y1="239.5" x2="1578" y2="239.5" stroke="#d4d4d4" stroke-width="1"/><line x1="28" y1="257.5" x2="1578" y2="257.5" stroke="#d4d4d4" stroke-width="1"/><line x1="28" y1="275.5" x2="1578" y2="275.5" stroke="#d4d4d4" stroke-width="1"/><line x1="28" y1="293.5" x2="1578" y2="293.5" stroke="#d4d4d4" stroke-width="1"/><line x1="28" y1="311.5" x2="1578" y2="311.5" stroke="#d4d4d4" stroke-width="1"/><line x1="28" y1="329.5" x2="1578" y2="329.5" stroke="#d4d4d4" stroke-width="1"/><line x1="28" y1="347.5" x2="1578" y2="347.5" stroke="#d4d4d4" stroke-width="1"/><line x1="28" y1="367.5" x2="1578" y2="367.5" stroke="#d4d4d4" stroke-width="1"/><line x1="28" y1="385.5" x2="1578" y2="385.5" stroke="#d4d4d4" stroke-width="1"/><line x1="28" y1="403.5" x2="1578" y2="403.5" stroke="#d4d4d4" stroke-width="1"/><line x1="28" y1="421.5" x2="1578" y2="421.5" stroke="#d4d4d4" stroke-width="1"/><line x1="28" y1="439.5" x2="1578" y2="439.5" stroke="#d4d4d4" stroke-width="1"/><line x1="28" y1="457.5" x2="1578" y2="457.5" stroke="#d4d4d4" stroke-width="1"/><line x1="28" y1="475.5" x2="1578" y2="475.5" stroke="#d4d4d4" stroke-width="1"/><line x1="28" y1="493.5" x2="1578" y2="493.5" stroke="#d4d4d4" stroke-width="1"/><line x1="28" y1="511.5" x2="1578" y2="511.5" stroke="#d4d4d4" stroke-width="1"/><line x1="28" y1="529.5" x2="1578" y2="529.5" stroke="#d4d4d4" stroke-width="1"/><line x1="28" y1="547.5" x2="1578" y2="547.5" stroke="#d4d4d4" stroke-width="1"/><line x1="28" y1="565.5" x2="1578" y2="565.5" stroke="#d4d4d4" stroke-width="1"/><line x1="28" y1="583.5" x2="1578" y2="583.5" stroke="#d4d4d4" stroke-width="1"/><line x1="28" y1="601.5" x2="1578" y2="601.5" stroke="#d4d4d4" stroke-width="1"/><line x1="28.5" y1="3" x2="28.5" y2="19" stroke="#c6c6c6" stroke-width="1"/><line x1="114.5" y1="3" x2="114.5" y2="19" stroke="#c6c6c6" stroke-width="1"/><line x1="159.5" y1="3" x2="159.5" y2="19" stroke="#c6c6c6" stroke-width="1"/><line x1="230.5" y1="3" x2="230.5" y2="19" stroke="#c6c6c6" stroke-width="1"/><line x1="307.5" y1="3" x2="307.5" y2="19" stroke="#c6c6c6" stroke-width="1"/><line x1="384.5" y1="3" x2="384.5" y2="19" stroke="#c6c6c6" stroke-width="1"/><line x1="455.5" y1="3" x2="455.5" y2="19" stroke="#c6c6c6" stroke-width="1"/><line x1="526.5" y1="3" x2="526.5" y2="19" stroke="#c6c6c6" stroke-width="1"/><line x1="597.5" y1="3" x2="597.5" y2="19" stroke="#c6c6c6" stroke-width="1"/><line x1="668.5" y1="3" x2="668.5" y2="19" stroke="#c6c6c6" stroke-width="1"/><line x1="770.5" y1="3" x2="770.5" y2="19" stroke="#c6c6c6" stroke-width="1"/><line x1="841.5" y1="3" x2="841.5" y2="19" stroke="#c6c6c6" stroke-width="1"/><line x1="1118.5" y1="3" x2="1118.5" y2="19" stroke="#c6c6c6" stroke-width="1"/><line x1="1258.5" y1="3" x2="1258.5" y2="19" stroke="#c6c6c6" stroke-width="1"/><line x1="1329.5" y1="3" x2="1329.5" y2="19" stroke="#c6c6c6" stroke-width="1"/><line x1="1400.5" y1="3" x2="1400.5" y2="19" stroke="#c6c6c6" stroke-width="1"/><line x1="1471.5" y1="3" x2="1471.5" y2="19" stroke="#c6c6c6" stroke-width="1"/><line x1="1542.5" y1="3" x2="1542.5" y2="19" stroke="#c6c6c6" stroke-width="1"/><line x1="0" y1="19.5" x2="1578" y2="19.5" stroke="#ababab" stroke-width="1"/><line x1="0" y1="95.5" x2="28" y2="95.5" stroke="#c6c6c6" stroke-width="1"/><line x1="0" y1="113.5" x2="28" y2="113.5" stroke="#c6c6c6" stroke-width="1"/><line x1="0" y1="131.5" x2="28" y2="131.5" stroke="#c6c6c6" stroke-width="1"/><line x1="0" y1="149.5" x2="28" y2="149.5" stroke="#c6c6c6" stroke-width="1"/><line x1="0" y1="167.5" x2="28" y2="167.5" stroke="#c6c6c6" stroke-width="1"/><line x1="0" y1="185.5" x2="28" y2="185.5" stroke="#c6c6c6" stroke-width="1"/><line x1="0" y1="203.5" x2="28" y2="203.5" stroke="#c6c6c6" stroke-width="1"/><line x1="0" y1="221.5" x2="28" y2="221.5" stroke="#c6c6c6" stroke-width="1"/><line x1="0" y1="239.5" x2="28" y2="239.5" stroke="#c6c6c6" stroke-width="1"/><line x1="0" y1="257.5" x2="28" y2="257.5" stroke="#c6c6c6" stroke-width="1"/><line x1="0" y1="275.5" x2="28" y2="275.5" stroke="#c6c6c6" stroke-width="1"/><line x1="0" y1="293.5" x2="28" y2="293.5" stroke="#c6c6c6" stroke-width="1"/><line x1="0" y1="311.5" x2="28" y2="311.5" stroke="#c6c6c6" stroke-width="1"/><line x1="0" y1="329.5" x2="28" y2="329.5" stroke="#c6c6c6" stroke-width="1"/><line x1="0" y1="347.5" x2="28" y2="347.5" stroke="#c6c6c6" stroke-width="1"/><line x1="0" y1="367.5" x2="28" y2="367.5" stroke="#c6c6c6" stroke-width="1"/><line x1="0" y1="385.5" x2="28" y2="385.5" stroke="#c6c6c6" stroke-width="1"/><line x1="0" y1="403.5" x2="28" y2="403.5" stroke="#c6c6c6" stroke-width="1"/><line x1="0" y1="421.5" x2="28" y2="421.5" stroke="#c6c6c6" stroke-width="1"/><line x1="0" y1="439.5" x2="28" y2="439.5" stroke="#c6c6c6" stroke-width="1"/><line x1="0" y1="457.5" x2="28" y2="457.5" stroke="#c6c6c6" stroke-width="1"/><line x1="0" y1="475.5" x2="28" y2="475.5" stroke="#c6c6c6" stroke-width="1"/><line x1="0" y1="493.5" x2="28" y2="493.5" stroke="#c6c6c6" stroke-width="1"/><line x1="0" y1="511.5" x2="28" y2="511.5" stroke="#c6c6c6" stroke-width="1"/><line x1="0" y1="529.5" x2="28" y2="529.5" stroke="#c6c6c6" stroke-width="1"/><line x1="0" y1="547.5" x2="28" y2="547.5" stroke="#c6c6c6" stroke-width="1"/><line x1="0" y1="565.5" x2="28" y2="565.5" stroke="#c6c6c6" stroke-width="1"/><line x1="0" y1="583.5" x2="28" y2="583.5" stroke="#c6c6c6" stroke-width="1"/><line x1="0" y1="601.5" x2="28" y2="601.5" stroke="#c6c6c6" stroke-width="1"/><line x1="28.5" y1="0" x2="28.5" y2="601" stroke="#ababab" stroke-width="1"/><rect x="307" y="20" width="77" height="75" fill="#ff0000"/><rect x="307" y="95" width="77" height="127" fill="#ffff00"/><rect x="841" y="20" width="417" height="75" fill="#ccff66"/><rect x="841" y="95" width="417" height="253" fill="#ccecff"/><rect x="385" y="20" width="385" height="129" fill="#ffffff"/><path d="M25 215 L25 225 L15 225 Z" transform="translate(0,-209)" fill="#b8b8b8"/><line x1="28.5" y1="19" x2="28.5" y2="348" stroke="#000" stroke-width="1"/><line x1="114.5" y1="19" x2="114.5" y2="348" stroke="#000" stroke-width="1"/><line x1="159.5" y1="19" x2="159.5" y2="348" stroke="#000" stroke-width="1"/><line x1="230.5" y1="19" x2="230.5" y2="348" stroke="#000" stroke-width="1"/><line x1="307.5" y1="19" x2="307.5" y2="348" stroke="#000" stroke-width="1"/><line x1="384.5" y1="19" x2="384.5" y2="348" stroke="#000" stroke-width="1"/><line x1="28" y1="95.5" x2="385" y2="95.5" stroke="#000" stroke-width="1"/><line x1="28" y1="113.5" x2="385" y2="113.5" stroke="#000" stroke-width="1"/><line x1="28" y1="131.5" x2="385" y2="131.5" stroke="#000" stroke-width="1"/><line x1="28" y1="149.5" x2="385" y2="149.5" stroke="#000" stroke-width="1"/><line x1="28" y1="167.5" x2="385" y2="167.5" stroke="#000" stroke-width="1"/><line x1="28" y1="185.5" x2="385" y2="185.5" stroke="#000" stroke-width="1"/><line x1="28" y1="203.5" x2="385" y2="203.5" stroke="#000" stroke-width="1"/><line x1="28" y1="221.5" x2="385" y2="221.5" stroke="#000" stroke-width="1"/><line x1="28" y1="239.5" x2="385" y2="239.5" stroke="#000" stroke-width="1"/><line x1="28" y1="257.5" x2="385" y2="257.5" stroke="#000" stroke-width="1"/><line x1="28" y1="275.5" x2="385" y2="275.5" stroke="#000" stroke-width="1"/><line x1="28" y1="293.5" x2="385" y2="293.5" stroke="#000" stroke-width="1"/><line x1="28" y1="311.5" x2="385" y2="311.5" stroke="#000" stroke-width="1"/><line x1="28" y1="329.5" x2="385" y2="329.5" stroke="#000" stroke-width="1"/><line x1="28" y1="347.5" x2="385" y2="347.5" stroke="#000" stroke-width="1"/><line x1="0" y1="19.5" x2="1578" y2="19.5" stroke="#9a9a9a" stroke-width="1"/></svg>
<div class="a m" style="left:28px;top:214px;width:86px;text-align:center;line-height:18px;color:#222">A</div>
<div class="a m" style="left:114px;top:214px;width:45px;text-align:center;line-height:18px;color:#222">B</div>
<div class="a m" style="left:159px;top:214px;width:71px;text-align:center;line-height:18px;color:#222">C</div>
<div class="a m" style="left:230px;top:214px;width:77px;text-align:center;line-height:18px;color:#222">D</div>
<div class="a m" style="left:307px;top:214px;width:77px;text-align:center;line-height:18px;color:#222">E</div>
<div class="a m" style="left:384px;top:214px;width:71px;text-align:center;line-height:18px;color:#222">F</div>
<div class="a m" style="left:455px;top:214px;width:71px;text-align:center;line-height:18px;color:#222">G</div>
<div class="a m" style="left:526px;top:214px;width:71px;text-align:center;line-height:18px;color:#222">H</div>
<div class="a m" style="left:597px;top:214px;width:71px;text-align:center;line-height:18px;color:#222">I</div>
<div class="a m" style="left:668px;top:214px;width:102px;text-align:center;line-height:18px;color:#222">J</div>
<div class="a m" style="left:770px;top:214px;width:71px;text-align:center;line-height:18px;color:#222">K</div>
<div class="a m" style="left:841px;top:214px;width:277px;text-align:center;line-height:18px;color:#222">L</div>
<div class="a m" style="left:1118px;top:214px;width:140px;text-align:center;line-height:18px;color:#222">M</div>
<div class="a m" style="left:1258px;top:214px;width:71px;text-align:center;line-height:18px;color:#222">N</div>
<div class="a m" style="left:1329px;top:214px;width:71px;text-align:center;line-height:18px;color:#222">O</div>
<div class="a m" style="left:1400px;top:214px;width:71px;text-align:center;line-height:18px;color:#222">P</div>
<div class="a m" style="left:1471px;top:214px;width:71px;text-align:center;line-height:18px;color:#222">Q</div>
<div class="a m" style="left:0;top:289px;width:28px;text-align:center;color:#222">1</div>
<div class="a m" style="left:0;top:307px;width:28px;text-align:center;color:#222">2</div>
<div class="a m" style="left:0;top:325px;width:28px;text-align:center;color:#222">3</div>
<div class="a m" style="left:0;top:343px;width:28px;text-align:center;color:#222">4</div>
<div class="a m" style="left:0;top:361px;width:28px;text-align:center;color:#222">5</div>
<div class="a m" style="left:0;top:379px;width:28px;text-align:center;color:#222">6</div>
<div class="a m" style="left:0;top:397px;width:28px;text-align:center;color:#222">7</div>
<div class="a m" style="left:0;top:415px;width:28px;text-align:center;color:#222">8</div>
<div class="a m" style="left:0;top:433px;width:28px;text-align:center;color:#222">9</div>
<div class="a m" style="left:0;top:451px;width:28px;text-align:center;color:#222">10</div>
<div class="a m" style="left:0;top:469px;width:28px;text-align:center;color:#222">11</div>
<div class="a m" style="left:0;top:487px;width:28px;text-align:center;color:#222">12</div>
<div class="a m" style="left:0;top:505px;width:28px;text-align:center;color:#222">13</div>
<div class="a m" style="left:0;top:523px;width:28px;text-align:center;color:#222">14</div>
<div class="a m" style="left:0;top:541px;width:28px;text-align:center;color:#222">15</div>
<div class="a m" style="left:0;top:561px;width:28px;text-align:center;color:#222">16</div>
<div class="a m" style="left:0;top:579px;width:28px;text-align:center;color:#222">17</div>
<div class="a m" style="left:0;top:597px;width:28px;text-align:center;color:#222">18</div>
<div class="a m" style="left:0;top:615px;width:28px;text-align:center;color:#222">19</div>
<div class="a m" style="left:0;top:633px;width:28px;text-align:center;color:#222">20</div>
<div class="a m" style="left:0;top:651px;width:28px;text-align:center;color:#222">21</div>
<div class="a m" style="left:0;top:669px;width:28px;text-align:center;color:#222">22</div>
<div class="a m" style="left:0;top:687px;width:28px;text-align:center;color:#222">23</div>
<div class="a m" style="left:0;top:705px;width:28px;text-align:center;color:#222">24</div>
<div class="a m" style="left:0;top:723px;width:28px;text-align:center;color:#222">25</div>
<div class="a m" style="left:0;top:741px;width:28px;text-align:center;color:#222">26</div>
<div class="a m" style="left:0;top:759px;width:28px;text-align:center;color:#222">27</div>
<div class="a m" style="left:0;top:777px;width:28px;text-align:center;color:#222">28</div>
<div class="a m" style="left:0;top:795px;width:28px;text-align:center;color:#222">29</div>
<div class="a m" style="left:28px;top:307px;width:84px;text-align:right">2<span class="z">0</span>2<span class="z">0</span>/1/6</div>
<div class="a m" style="left:116px;top:307px">A</div>
<div class="a m" style="left:159px;top:307px;width:69px;text-align:right">65<span class="z">0</span><span class="z">0</span></div>
<div class="a m" style="left:230px;top:307px;width:75px;text-align:right">65<span class="z">0</span><span class="z">0</span></div>
<div class="a m" style="left:307px;top:307px;width:75px;text-align:right">37597</div>
<div class="a m" style="left:28px;top:325px;width:84px;text-align:right">2<span class="z">0</span>2<span class="z">0</span>/2/24</div>
<div class="a m" style="left:116px;top:325px">A</div>
<div class="a m" style="left:159px;top:325px;width:69px;text-align:right">24254</div>
<div class="a m" style="left:230px;top:325px;width:75px;text-align:right">61851</div>
<div class="a m" style="left:307px;top:325px;width:75px;text-align:right">61851</div>
<div class="a m" style="left:28px;top:343px;width:84px;text-align:right">2<span class="z">0</span>2<span class="z">0</span>/2/28</div>
<div class="a m" style="left:116px;top:343px">A</div>
<div class="a m" style="left:159px;top:343px;width:69px;text-align:right">244<span class="z">0</span>2</div>
<div class="a m" style="left:230px;top:343px;width:75px;text-align:right">86253</div>
<div class="a m" style="left:307px;top:343px;width:75px;text-align:right">1<span class="z">0</span><span class="z">0</span><span class="z">0</span>5<span class="z">0</span>.5</div>
<div class="a m" style="left:28px;top:361px;width:84px;text-align:right">2<span class="z">0</span>2<span class="z">0</span>/1/6</div>
<div class="a m" style="left:116px;top:361px">A</div>
<div class="a m" style="left:159px;top:361px;width:69px;text-align:right">31<span class="z">0</span>97</div>
<div class="a m" style="left:230px;top:361px;width:75px;text-align:right">37597</div>
<div class="a m" style="left:307px;top:361px;width:75px;text-align:right">37597</div>
<div class="a m" style="left:28px;top:379px;width:84px;text-align:right">2<span class="z">0</span>2<span class="z">0</span>/3/1<span class="z">0</span></div>
<div class="a m" style="left:116px;top:379px">A</div>
<div class="a m" style="left:159px;top:379px;width:69px;text-align:right">815</div>
<div class="a m" style="left:230px;top:379px;width:75px;text-align:right">1<span class="z">0</span><span class="z">0</span>865.5</div>
<div class="a m" style="left:307px;top:379px;width:75px;text-align:right">1<span class="z">0</span><span class="z">0</span>865.5</div>
<div class="a m" style="left:28px;top:397px;width:84px;text-align:right">2<span class="z">0</span>2<span class="z">0</span>/2/28</div>
<div class="a m" style="left:116px;top:397px">A</div>
<div class="a m" style="left:159px;top:397px;width:69px;text-align:right">13797.5</div>
<div class="a m" style="left:230px;top:397px;width:75px;text-align:right">1<span class="z">0</span><span class="z">0</span><span class="z">0</span>5<span class="z">0</span>.5</div>
<div class="a m" style="left:307px;top:397px;width:75px;text-align:right">1<span class="z">0</span><span class="z">0</span><span class="z">0</span>5<span class="z">0</span>.5</div>
<div class="a m" style="left:28px;top:415px;width:84px;text-align:right">2<span class="z">0</span>2<span class="z">0</span>/5/12</div>
<div class="a m" style="left:116px;top:415px">A</div>
<div class="a m" style="left:159px;top:415px;width:69px;text-align:right">794<span class="z">0</span></div>
<div class="a m" style="left:230px;top:415px;width:75px;text-align:right">1<span class="z">0</span>88<span class="z">0</span>5.5</div>
<div class="a m" style="left:307px;top:415px;width:75px;text-align:right">1<span class="z">0</span>88<span class="z">0</span>5.5</div>
<div class="a m" style="left:28px;top:433px;width:84px;text-align:right">2<span class="z">0</span>2<span class="z">0</span>/1/5</div>
<div class="a m" style="left:116px;top:433px">B</div>
<div class="a m" style="left:159px;top:433px;width:69px;text-align:right">9788</div>
<div class="a m" style="left:28px;top:451px;width:84px;text-align:right">2<span class="z">0</span>2<span class="z">0</span>/2/27</div>
<div class="a m" style="left:116px;top:451px">B</div>
<div class="a m" style="left:159px;top:451px;width:69px;text-align:right">7683</div>
<div class="a m" style="left:28px;top:469px;width:84px;text-align:right">2<span class="z">0</span>2<span class="z">0</span>/3/9</div>
<div class="a m" style="left:116px;top:469px">B</div>
<div class="a m" style="left:159px;top:469px;width:69px;text-align:right">52<span class="z">0</span>8</div>
<div class="a m" style="left:28px;top:487px;width:84px;text-align:right">2<span class="z">0</span>2<span class="z">0</span>/2/9</div>
<div class="a m" style="left:116px;top:487px">B</div>
<div class="a m" style="left:159px;top:487px;width:69px;text-align:right">12781</div>
<div class="a m" style="left:28px;top:505px;width:84px;text-align:right">2<span class="z">0</span>2<span class="z">0</span>/1/3<span class="z">0</span></div>
<div class="a m" style="left:116px;top:505px">B</div>
<div class="a m" style="left:159px;top:505px;width:69px;text-align:right">298<span class="z">0</span>5</div>
<div class="a m" style="left:28px;top:523px;width:84px;text-align:right">2<span class="z">0</span>2<span class="z">0</span>/3/9</div>
<div class="a m" style="left:116px;top:523px">B</div>
<div class="a m" style="left:159px;top:523px;width:69px;text-align:right">28478</div>
<div class="a m" style="left:28px;top:541px;width:84px;text-align:right">2<span class="z">0</span>2<span class="z">0</span>/3/9</div>
<div class="a m" style="left:116px;top:541px">B</div>
<div class="a m" style="left:159px;top:541px;width:69px;text-align:right">5<span class="z">0</span><span class="z">0</span>1</div>
<div class="a m" style="left:841px;top:307px;width:275px;text-align:right">65<span class="z">0</span><span class="z">0</span></div>
<div class="a m" style="left:1118px;top:307px;width:138px;text-align:right">31<span class="z">0</span>97</div>
<div class="a m" style="left:1118px;top:325px;width:138px;text-align:right"><span class="z">0</span></div>
<div class="a m" style="left:1118px;top:343px;width:138px;text-align:right">13797.5</div>
<div class="a m" style="left:1118px;top:361px;width:138px;text-align:right"><span class="z">0</span></div>
<div class="a m" style="left:1118px;top:379px;width:138px;text-align:right"><span class="z">0</span></div>
<div class="a m" style="left:1118px;top:397px;width:138px;text-align:right"><span class="z">0</span></div>
<div class="a m" style="left:1118px;top:415px;width:138px;text-align:right"><span class="z">0</span></div>
<div class="a m" style="left:1118px;top:433px;width:138px;text-align:right"><span class="z">0</span></div>
<div class="a m" style="left:1118px;top:451px;width:138px;text-align:right"><span class="z">0</span></div>
<div class="a m" style="left:1118px;top:469px;width:138px;text-align:right">33479</div>
<div class="a m" style="left:1118px;top:487px;width:138px;text-align:right"><span class="z">0</span></div>
<div class="a m" style="left:1118px;top:505px;width:138px;text-align:right"><span class="z">0</span></div>
<div class="a m" style="left:1118px;top:523px;width:138px;text-align:right">5<span class="z">0</span><span class="z">0</span>1</div>
<div class="a m" style="left:1118px;top:541px;width:138px;text-align:right"><span class="z">0</span></div>
<div class="a cj" style="left:31px;top:258px">日期</div>
<div class="a cj" style="left:116px;top:258px">产品</div>
<div class="a cj" style="left:161px;top:258px">数量</div>
<div class="a cj" style="left:232px;top:258px">累计数量</div>
<div class="a cj" style="left:307px;top:258px;width:77px;text-align:center;font-weight:bold">实验</div>
<div class="a cj" style="left:843px;top:249px">实验数据必须除去同一日期后续同类产品<br>累加和得到根据要求的真正的累计数据</div>
<div class="a cj" style="left:1120px;top:249px">同一日期后续同类产<br>品的数量累加之和</div>
<div class="a" style="left:842px;top:209px;width:276px;height:19px;background:#d2d2d2"></div>
<div class="a" style="left:842px;top:226px;width:276px;height:2px;background:#217346"></div>
<div class="a m" style="left:842px;top:214px;width:276px;text-align:center;color:#222">L</div>
<div class="a" style="left:0;top:305px;width:28px;height:17px;background:#d2d2d2"></div>
<div class="a" style="left:26px;top:304px;width:2px;height:19px;background:#217346"></div>
<div class="a m" style="left:0;top:307px;width:28px;text-align:center;color:#217346">2</div>
<svg class="a" style="left:300px;top:229px" width="7" height="7"><path d="M0 0 H7 V7 Z" fill="#b00000"/></svg>
<svg class="a" style="left:830px;top:225px" width="440" height="340" shape-rendering="crispEdges"><line x1="12" y1="97.5" x2="427" y2="97.5" stroke="#2a6f9e" stroke-width="1" stroke-dasharray="3,2"/><line x1="12" y1="115.5" x2="427" y2="115.5" stroke="#2a6f9e" stroke-width="1" stroke-dasharray="3,2"/><line x1="12" y1="133.5" x2="427" y2="133.5" stroke="#2a6f9e" stroke-width="1" stroke-dasharray="3,2"/><line x1="12" y1="151.5" x2="427" y2="151.5" stroke="#2a6f9e" stroke-width="1" stroke-dasharray="3,2"/><line x1="12" y1="169.5" x2="427" y2="169.5" stroke="#2a6f9e" stroke-width="1" stroke-dasharray="3,2"/><line x1="12" y1="187.5" x2="427" y2="187.5" stroke="#2a6f9e" stroke-width="1" stroke-dasharray="3,2"/><line x1="12" y1="205.5" x2="427" y2="205.5" stroke="#2a6f9e" stroke-width="1" stroke-dasharray="3,2"/><line x1="12" y1="223.5" x2="427" y2="223.5" stroke="#2a6f9e" stroke-width="1" stroke-dasharray="3,2"/><line x1="12" y1="241.5" x2="427" y2="241.5" stroke="#2a6f9e" stroke-width="1" stroke-dasharray="3,2"/><line x1="12" y1="259.5" x2="427" y2="259.5" stroke="#2a6f9e" stroke-width="1" stroke-dasharray="3,2"/><line x1="12" y1="277.5" x2="427" y2="277.5" stroke="#2a6f9e" stroke-width="1" stroke-dasharray="3,2"/><line x1="12" y1="295.5" x2="427" y2="295.5" stroke="#2a6f9e" stroke-width="1" stroke-dasharray="3,2"/><line x1="12" y1="313.5" x2="427" y2="313.5" stroke="#2a6f9e" stroke-width="1" stroke-dasharray="3,2"/><line x1="12" y1="79.5" x2="427" y2="79.5" stroke="#2a6f9e" stroke-width="1" stroke-dasharray="3,2"/><line x1="288.5" y1="4" x2="288.5" y2="331" stroke="#2a6f9e" stroke-width="1" stroke-dasharray="3,2"/><line x1="10.5" y1="3" x2="10.5" y2="334" stroke="#3d95d6" stroke-width="1"/><line x1="11.5" y1="3" x2="11.5" y2="332" stroke="#1e6f80" stroke-width="1"/><line x1="428.5" y1="3" x2="428.5" y2="334" stroke="#3d95d6" stroke-width="1"/><line x1="427.5" y1="3" x2="427.5" y2="332" stroke="#1e6f80" stroke-width="1"/><line x1="10" y1="333.5" x2="429" y2="333.5" stroke="#3d95d6" stroke-width="1"/><line x1="11" y1="331.5" x2="428" y2="331.5" stroke="#1e6f80" stroke-width="1"/><line x1="10" y1="3.5" x2="429" y2="3.5" stroke="#1e6f80" stroke-width="2"/></svg>
<div class="a" style="left:841px;top:303px;width:279px;height:21px;border:2px solid #217346"></div>
<div class="a" style="left:1115px;top:319px;width:6px;height:6px;background:#217346;border:1px solid #fff"></div>
<div class="a" style="left:830px;top:295px;width:297px;height:36px;border:3px solid #e8392e"></div>
<svg class="a" style="left:810px;top:200px" width="40" height="100"><path d="M10 4 L20.5 17.5 L17 18 L27 96 L26 96 L13 20 L5 20 Z" fill="#f03a2e"/></svg>
<div class="a" style="left:832px;top:202px;font-size:23.9px;line-height:28px;color:#7a168c;font-weight:500;text-shadow:0 0 1px #f2b8f2,0 0 2px #f7d0f7">只统计当前行同日期同类产品且不高于当前行日期同类产品的数量公式</div>
<div class="a" style="left:384px;top:231px;width:386px;text-align:center;font-size:16px;line-height:18px;color:#c00000">要求：按某一产品（此处以产品<b style="font-family:'Liberation Serif'">A</b>为例）的日期累加</div>
<div class="a" style="left:384px;top:249px;width:386px;text-align:center;font-size:16px;line-height:18px;color:#c00000">（即包含该产品在对应日期及之前时期的数量之</div>
<div class="a" style="left:384px;top:268px;width:386px;text-align:center;font-size:16px;line-height:18px;color:#c00000">和），当同一产品存在同一个日期时则按该产品从上</div>
<div class="a" style="left:384px;top:287px;width:386px;text-align:center;font-size:16px;line-height:18px;color:#c00000">到下（可以有其他顺序，只要保证每个数字是一次累</div>
<div class="a" style="left:384px;top:305px;width:386px;text-align:center;font-size:16px;line-height:18px;color:#c00000">加的即可）的顺序累加。<b style="color:#000;letter-spacing:1px">注：实验中（即<span style="font-family:'Liberation Serif'">E</span>列）的公</b></div>
<div class="a" style="left:384px;top:324px;width:386px;text-align:center;font-size:16px;line-height:18px;color:#000;font-weight:bold;letter-spacing:1px">式未能解决同一产品在同一日期下的累加问题）</div>
<div class="a" style="left:1578px;top:209px;width:22px;height:601px;background:#e6e6e6"></div>
<div class="a" style="left:1582px;top:213px;width:15px;height:15px;background:#fff;border:1px solid #c6c6c6"></div>
<svg class="a" style="left:1585px;top:217px" width="9" height="6"><path d="M0 5 L4.5 0.5 L9 5 Z" fill="#666"/></svg>
<div class="a" style="left:1582px;top:229px;width:15px;height:546px;background:#fff;border-left:1px solid #c6c6c6;border-right:1px solid #c6c6c6"></div>
<div class="a" style="left:1582px;top:775px;width:15px;height:21px;background:#dadada"></div>
<div class="a" style="left:1578px;top:228px;width:1px;height:582px;background:#bdbdbd"></div>
<div class="a" style="left:1590px;top:736px;width:6px;height:57px;background:#9a9a9a;border-radius:3px"></div>
<div class="a" style="left:1590px;top:766px;width:6px;height:26px;background:#4cc36a;border-radius:3px"></div>
<div class="a" style="left:1582px;top:796px;width:15px;height:14px;background:#fff;border:1px solid #c6c6c6"></div>
<svg class="a" style="left:1585px;top:801px" width="9" height="6"><path d="M0 0.5 L4.5 5 L9 0.5 Z" fill="#666"/></svg>
<div class="a" style="left:0;top:810px;width:1600px;height:28px;background:#e6e6e6;border-top:1px solid #c6c6c6"></div>
<svg class="a" style="left:26px;top:818px" width="40" height="12"><path d="M5 2 L1 6 L5 10 Z" fill="#b8b8b8"/><path d="M31 2 L35 6 L31 10 Z" fill="#b8b8b8"/></svg>
<div class="a" style="left:100px;top:810px;width:69px;height:25px;background:#fff;border-left:1px solid #c6c6c6;border-right:1px solid #c6c6c6"></div>
<div class="a" style="left:100px;top:833px;width:69px;height:2px;background:#217346"></div>
<div class="a" style="left:100px;top:813px;width:69px;text-align:center;font-size:13.6px;line-height:17px;color:#217346">Sheet1</div>
<svg class="a" style="left:201px;top:815px" width="17" height="17"><circle cx="8.5" cy="8.5" r="7.5" fill="none" stroke="#666" stroke-width="1.2"/><path d="M8.5 4.5 V12.5 M4.5 8.5 H12.5" stroke="#666" stroke-width="1.4"/></svg>
<svg class="a" style="left:959px;top:816px" width="4" height="16"><circle cx="2" cy="3" r="1" fill="#999"/><circle cx="2" cy="8" r="1" fill="#999"/><circle cx="2" cy="13" r="1" fill="#999"/></svg>
<div class="a" style="left:977px;top:817px;width:604px;height:15px;background:#fff;border:1px solid #c6c6c6"></div>
<div class="a" style="left:992px;top:818px;width:538px;height:13px;background:#fff;border-left:1px solid #c6c6c6;border-right:1px solid #dcdcdc"></div>
<div class="a" style="left:1531px;top:818px;width:33px;height:13px;background:#e6e6e6"></div>
<div class="a" style="left:1564px;top:818px;width:1px;height:13px;background:#c6c6c6"></div>
<svg class="a" style="left:980px;top:820px" width="8" height="9"><path d="M6 0.5 L1.5 4.5 L6 8.5 Z" fill="#444"/></svg>
<svg class="a" style="left:1568px;top:820px" width="8" height="9"><path d="M1.5 0.5 L6 4.5 L1.5 8.5 Z" fill="#444"/></svg>
<div class="a" style="left:0;top:838px;width:1600px;height:22px;background:#f3f2f1;border-top:1px solid #d8d8d8"></div>
<svg class="a" style="left:7px;top:842px" width="16" height="15"><path d="M0.5 0.5 H13.5 M0.5 2.5 H13.5 M0.5 0.5 V13.5 H7" fill="none" stroke="#555"/><path d="M2.5 5.5 H6 M2.5 8.5 H5 M2.5 11.5 H5" stroke="#555"/><circle cx="11" cy="10" r="4" fill="none" stroke="#555"/><circle cx="11" cy="10" r="2" fill="#555"/></svg>
<div class="a" style="left:1296px;top:839px;width:40px;height:21px;background:#d4d4d4"></div>
<svg class="a" style="left:1307px;top:842px" width="15" height="15"><rect x="0.5" y="0.5" width="13" height="13" fill="none" stroke="#333"/><path d="M0.5 4.5 H13.5 M0.5 9.5 H13.5 M4.5 0.5 V13.5 M9.5 0.5 V13.5" stroke="#333"/></svg>
<svg class="a" style="left:1347px;top:842px" width="15" height="15"><rect x="0.5" y="0.5" width="13" height="13" fill="none" stroke="#333"/><rect x="3.5" y="3.5" width="7" height="8" fill="none" stroke="#333"/><path d="M5 6 H9 M5 8 H9" stroke="#333"/></svg>
<svg class="a" style="left:1387px;top:842px" width="15" height="15"><rect x="0.5" y="0.5" width="13" height="13" fill="none" stroke="#333"/><path d="M4.5 0.5 V7.5 H9.5 V0.5" fill="none" stroke="#333"/></svg>
<div class="a" style="left:1421px;top:848px;width:9px;height:1px;background:#444"></div>
<div class="a" style="left:1434px;top:848px;width:98px;height:1px;background:#b0b0b0"></div>
<div class="a" style="left:1482px;top:842px;width:5px;height:11px;background:#666"></div>
<svg class="a" style="left:1538px;top:843px" width="10" height="10"><path d="M5 0.5 V9.5 M0.5 5 H9.5" stroke="#444"/></svg>
<div class="a" style="left:1559px;top:842px;font-size:12.5px;line-height:14px;color:#333">100%</div>
<div class="a" style="left:1570px;top:209px;width:8px;height:19px;overflow:hidden"><div class="a m" style="left:3px;top:5px;color:#111">R</div></div>
<div class="a" style="left:0;top:860px;width:1600px;height:4px;background:#1f2a33"></div>
</body></html>
